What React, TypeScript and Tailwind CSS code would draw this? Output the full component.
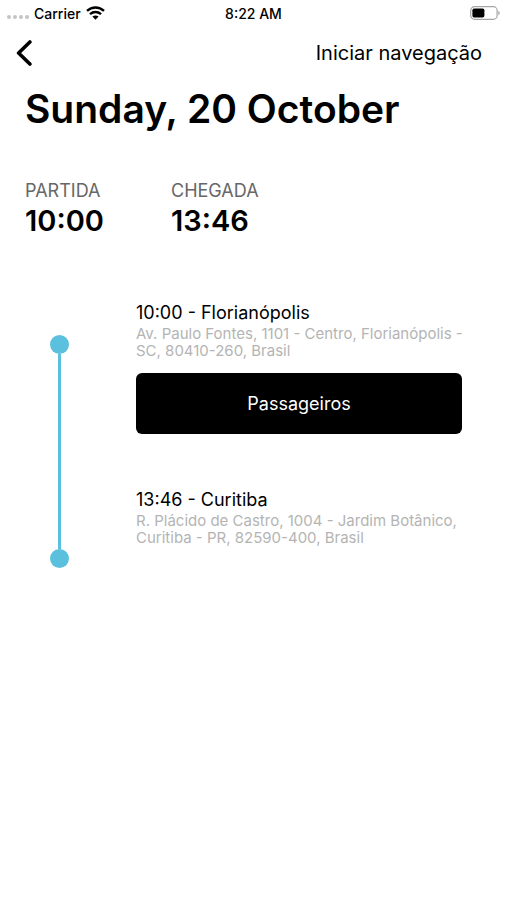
import React from 'react';

const stops = [
  {
    time: '10:00',
    city: 'Florianópolis',
    address: 'Av. Paulo Fontes, 1101 - Centro, Florianópolis - SC, 80410-260, Brasil',
    hasPassengers: true,
  },
  {
    time: '13:46',
    city: 'Curitiba',
    address: 'R. Plácido de Castro, 1004 - Jardim Botânico, Curitiba - PR, 82590-400, Brasil',
    hasPassengers: false,
  },
];

const summary = [
  { label: 'Partida', value: '10:00' },
  { label: 'Chegada', value: '13:46' },
];

function StatusBar() {
  return (
    <div className="grid grid-cols-3 items-center h-[26px] px-[7px] text-[14px] font-medium">
      <div className="flex items-center gap-[5px]">
        <span className="flex gap-[2px] pt-2">
          {[0, 1, 2, 3].map((dot) => (
            <span key={dot} className="size-[4px] rounded-full bg-[#c4c4c4]" />
          ))}
        </span>
        <span>Carrier</span>
        <svg width="19" height="14" viewBox="0 0 19 14" fill="none" stroke="black" strokeWidth="2.4">
          <path d="M1 4.9C5.8 0.3 13.2 0.3 18 4.9" />
          <path d="M4 8.2C7.2 5.3 11.8 5.3 15 8.2" />
          <path d="M6.4 10.6C8.2 9.1 10.8 9.1 12.6 10.6L9.5 13.7Z" fill="black" stroke="none" />
        </svg>
      </div>
      <span className="text-center">8:22 AM</span>
      <svg className="justify-self-end" width="30" height="14" viewBox="0 0 30 14">
        <rect x="0.7" y="0.7" width="26.4" height="12.6" rx="3.8" fill="none" stroke="#a6a6a6" strokeWidth="1.2" />
        <rect x="2.4" y="2.4" width="12" height="9.2" rx="1.8" fill="black" />
        <path d="M28.3 4.8C30.2 5.6 30.2 8.4 28.3 9.2Z" fill="#a6a6a6" />
      </svg>
    </div>
  );
}

export default function App() {
  return (
    <div className="min-h-screen bg-white text-black font-['Inter',sans-serif]">
      <StatusBar />

      <header className="flex items-center justify-between h-[53px] pl-4 pr-[25px]">
        <button aria-label="Voltar">
          <svg
            width="16"
            height="26"
            viewBox="0 0 16 26"
            fill="none"
            stroke="black"
            strokeWidth="3.6"
            strokeLinecap="round"
            strokeLinejoin="round"
          >
            <path d="M13.9 2L2.6 13L13.9 24" />
          </svg>
        </button>
        <button className="text-[20px]">Iniciar navegação</button>
      </header>

      <main className="px-[25px]">
        <h1 className="text-[39px] leading-[60px] font-semibold">Sunday, 20 October</h1>

        <dl className="flex mt-[40px]">
          {summary.map((item) => (
            <div key={item.label} className="w-[146px]">
              <dt className="text-[18px] leading-[24px] uppercase text-[#666]">{item.label}</dt>
              <dd className="text-[29px] leading-[36px] font-semibold">{item.value}</dd>
            </div>
          ))}
        </dl>

        {/* Route */}
        <section className="flex mt-[62px]">
          <div className="flex flex-col items-center w-[69px] pt-[34px]">
            <span className="size-[19px] rounded-full bg-[#5bc0de]" />
            <span className="flex-1 w-[3px] bg-[#5bc0de]" />
            <span className="size-[19px] rounded-full bg-[#5bc0de]" />
          </div>
          <ol className="flex-1 pl-[42px] pr-5">
            {stops.map((stop) => (
              <li key={stop.city} className="mb-[22px]">
                <h2 className="text-[18px] leading-[24px]">{stop.time} - {stop.city}</h2>
                <p className="-mr-2 text-[15px] leading-[17px] text-[#b4b4b4]">{stop.address}</p>
                {stop.hasPassengers && (
                  <button className="mt-[14px] mb-[32px] h-[61px] w-full rounded-[6px] bg-black text-[18px] text-white">
                    Passageiros
                  </button>
                )}
              </li>
            ))}
          </ol>
        </section>
      </main>
    </div>
  );
}
